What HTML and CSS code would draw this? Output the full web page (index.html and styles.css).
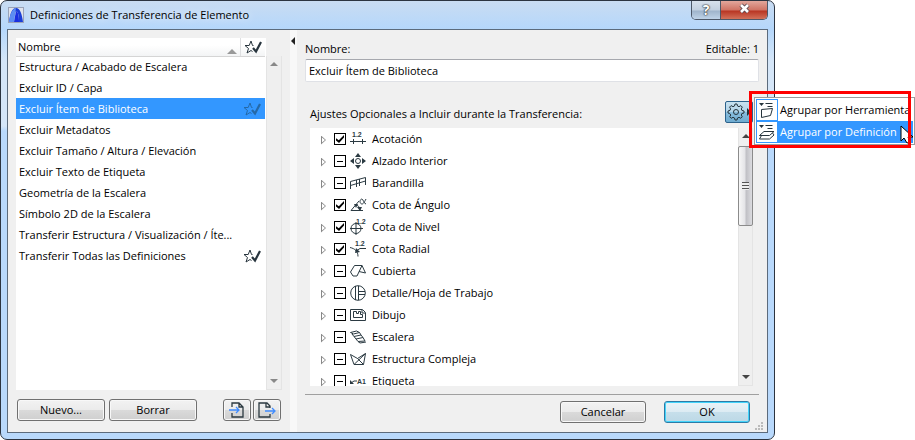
FILE: index.html
```
<!DOCTYPE html>
<html lang="es">
<head>
    <meta charset="UTF-8">
    <title>Definiciones de Transferencia de Elemento</title>
    <link rel="stylesheet" href="styles.css">
</head>
<body>
    <!--iconos repetidos-->
    <svg class="defs" width="0" height="0">
        <symbol id="star" viewBox="0 0 18 14">
            <path d="M9.500 5.500H8.500L7 1 5.200 5.500H1l3.500 3-1.500 4.500 4-2.500 1.500 1" fill="none" stroke="currentColor"/>
            <path d="M9 8l3 3.500 5-9.500" fill="none" stroke="currentColor" stroke-width="2.2"/>
        </symbol>
    </svg>

    <div class="window">
        <div class="titlebar">
            <svg class="logo" width="16" height="16" viewBox="0 0 16 16">
                <rect x=".5" y=".5" width="15" height="15" fill="#dfe3ec" stroke="#9aa3b8"/>
                <path d="M1 15C2 7 4 1 8 1c4 0 6 6 7 14h-4C11 9 10 4 8 4z" fill="#1c3fd6"/>
                <path d="M1 15C2 7 4 2 8 1L6 15z" fill="#5c8df2"/>
                <path d="M6 15l2-11c2 0 3 5 3 11z" fill="#1a2fe0"/>
            </svg>
            <h1>Definiciones de Transferencia de Elemento</h1>
            <div class="caption">
                <button type="button" class="help" aria-label="Ayuda">?</button>
                <button type="button" class="close" aria-label="Cerrar">
                    <svg width="13" height="11" viewBox="0 0 13 11"><path d="M3 2l7 7M10 2L3 9" stroke="#5b4a50" stroke-width="4.4"/><path d="M3 2l7 7M10 2L3 9" stroke="#fff" stroke-width="2.6"/></svg>
                </button>
            </div>
        </div>

        <div class="client">
            <!--lista de definiciones-->
            <div class="left">
                <div class="list">
                    <table>
                        <thead>
                            <tr>
                                <th>Nombre<i class="sort"></i></th>
                                <th class="mark"><svg width="18" height="14"><use href="#star"/></svg></th>
                            </tr>
                        </thead>
                        <tbody>
                            <tr><td>Estructura / Acabado de Escalera</td><td></td></tr>
                            <tr><td>Excluir ID / Capa</td><td></td></tr>
                            <tr class="selected"><td>Excluir Ítem de Biblioteca</td><td class="mark"><svg width="18" height="14"><use href="#star"/></svg></td></tr>
                            <tr><td>Excluir Metadatos</td><td></td></tr>
                            <tr><td>Excluir Tamaño / Altura / Elevación</td><td></td></tr>
                            <tr><td>Excluir Texto de Etiqueta</td><td></td></tr>
                            <tr><td>Geometría de la Escalera</td><td></td></tr>
                            <tr><td>Símbolo 2D de la Escalera</td><td></td></tr>
                            <tr><td>Transferir Estructura / Visualización / Íte...</td><td></td></tr>
                            <tr><td>Transferir Todas las Definiciones</td><td class="mark"><svg width="18" height="14"><use href="#star"/></svg></td></tr>
                        </tbody>
                    </table>
                    <div class="scroll off"><i class="up"></i><i class="down"></i></div>
                </div>
                <div class="tools">
                    <button type="button" class="btn">Nuevo...</button>
                    <button type="button" class="btn">Borrar</button>
                    <button type="button" class="btn small first" aria-label="Importar">
                        <svg width="18" height="18" viewBox="0 0 18 18" fill="none"><path d="M4 6V2h7l4 4v10H4v-4M11 2v4h4" stroke="#2b3940" stroke-width="1.3"/><path d="M1 9h10M8 6l3 3-3 3" stroke="#3f8cff" stroke-width="1.3"/></svg>
                    </button>
                    <button type="button" class="btn small" aria-label="Exportar">
                        <svg width="18" height="18" viewBox="0 0 18 18" fill="none"><path d="M12 7V5L9 2H1v14h11v-3M8 2v4h4" stroke="#2b3940" stroke-width="1.3"/><path d="M7 10h10M14 7l3 3-3 3" stroke="#3f8cff" stroke-width="1.3"/></svg>
                    </button>
                </div>
            </div>

            <div class="divider"><i></i></div>

            <!--ajustes-->
            <form class="right">
                <div class="labels">
                    <label for="name">Nombre:</label>
                    <span>Editable: 1</span>
                </div>
                <input class="name" id="name" type="text" value="Excluir Ítem de Biblioteca">

                <div class="options-head">
                    <span>Ajustes Opcionales a Incluir durante la Transferencia:</span>
                    <div class="gear-wrap">
                        <button type="button" class="gear" aria-label="Agrupar">
                            <svg width="24" height="18" viewBox="0 0 24 18" fill="none" stroke="#26343c">
                                <path d="M8 1h2l.5 2 1.5.7 1.8-1.1 1.5 1.5-1 1.8.6 1.5 2.1.6v2l-2.1.5-.6 1.5 1 1.8-1.5 1.5-1.8-1-1.5.7L10 17H8l-.5-2-1.5-.7-1.8 1-1.5-1.5 1.1-1.8L2.700 10.500 1 10V8l2-.6.6-1.500-1-1.800 1.500-1.500L6 3.700 7.500 3z"/>
                                <circle cx="9" cy="9" r="2.500"/>
                                <path d="M20 5v8l4-4z" fill="#26343c" stroke="none"/>
                            </svg>
                        </button>
                        <div class="menu">
                            <button type="button">
                                <svg width="22" height="22" viewBox="0 0 20 20" fill="none" stroke="#26343c"><path d="M2 3h5L4.500 6z" fill="#26343c" stroke="none"/><path d="M8.500 3.500h7M10.500 6.500h5M4.500 9.500l11-1-2 7-9 2z"/></svg>
                                Agrupar por Herramienta
                            </button>
                            <button type="button" class="active">
                                <svg width="22" height="22" viewBox="0 0 20 20" fill="none" stroke="#26343c"><path d="M2 3h5L4.500 6z" fill="#26343c" stroke="none"/><path d="M8.500 3.500h7M10.500 6.500h5M7 9.500h10l-4.500 4h-10zM4.500 13.500l-2 3.500h10l4.500-4-1.500-2"/></svg>
                                Agrupar por Definición
                            </button>
                            <svg class="cursor" width="14" height="19" viewBox="0 0 14 19"><path d="M1 1v15l3-3 3 5 3-1-2-5h5z" fill="#fff" stroke="#000"/></svg>
                        </div>
                    </div>
                </div>

                <div class="tree">
                    <ul>
                        <li><i class="arrow"></i><label><input type="checkbox" checked>
                            <svg viewBox="0 0 16 16"><text x="2" y="6">1.2</text><path d="M0 10.500h16M3.500 8v5M12.500 8v5"/></svg>Acotación</label></li>
                        <li><i class="arrow"></i><label><input type="checkbox" class="mixed">
                            <svg viewBox="0 0 16 16"><circle cx="8" cy="8" r="2.500"/><path class="fill" d="M8 0l3 4H5zM8 16l3-4H5zM0 8l4-3v6zM16 8l-4-3v6z"/></svg>Alzado Interior</label></li>
                        <li><i class="arrow"></i><label><input type="checkbox" class="mixed">
                            <svg viewBox="0 0 16 16"><path d="M.5 14V6.500l15-4V10M.5 10.500l15-4.500M6.500 12V5M9.500 11V4"/></svg>Barandilla</label></li>
                        <li><i class="arrow"></i><label><input type="checkbox" checked>
                            <svg viewBox="0 0 16 16"><path d="M9 4l-8 9.500h12M5 8c3 0 5 2 5 5M16 2c-2 4-3 5-4 5s-2-1-2-2.500 1-2.500 2-2.500 2 5 4 5"/><path class="fill" d="M4 7l4 0-2 4zM7 10h5l-2 4z"/></svg>Cota de Ángulo</label></li>
                        <li><i class="arrow"></i><label><input type="checkbox" checked>
                            <svg viewBox="0 0 16 16"><circle cx="6" cy="9.500" r="5"/><path d="M0 9.500h13M6 3v13"/><text x="6" y="5">1.2</text></svg>Cota de Nivel</label></li>
                        <li><i class="arrow"></i><label><input type="checkbox" checked>
                            <svg viewBox="0 0 16 16"><path d="M0 6.500c5 1 8 4 8 9M6 10l4-2.500h6"/><path class="fill" d="M5 12l1-5 4 4z"/><text x="5" y="5">1.2</text></svg>Cota Radial</label></li>
                        <li><i class="arrow"></i><label><input type="checkbox" class="mixed">
                            <svg viewBox="0 0 16 16"><path d="M.5 9l4-6.500H12L7 13H3zM12 2.500l3.500 7.500-6.500-1.500"/></svg>Cubierta</label></li>
                        <li><i class="arrow"></i><label><input type="checkbox" class="mixed">
                            <svg viewBox="0 0 16 16"><circle cx="8" cy="8" r="7.300"/><path d="M5.500 1v14M8.500 1v14M8.500 6.500H15M8.500 9.500H15"/></svg>Detalle/Hoja de Trabajo</label></li>
                        <li><i class="arrow"></i><label><input type="checkbox" class="mixed">
                            <svg viewBox="0 0 16 16"><path d="M.5 2.500h12l3 3v8H.5zM12 3v3h3M3.500 4.500h3v2h2v-2h2v3h2v3h-9z"/></svg>Dibujo</label></li>
                        <li><i class="arrow"></i><label><input type="checkbox" class="mixed">
                            <svg viewBox="0 0 16 16"><path d="M.5 3.500l6-1.500 3 1.500-6 1.500zM2 5l2 2.500 7-1.500-1.500-2.500M4 7.500l2 2.500 7-1.500L11 6M6 10l2 2.500 7-.5-2-3.500M8 12.500l2 1.500 6-1"/></svg>Escalera</label></li>
                        <li><i class="arrow"></i><label><input type="checkbox" class="mixed">
                            <svg viewBox="0 0 16 16"><path d="M.5 3.500l7 4 8-5-2 11H4zM4 13.500L15.500 2.500M7.500 7.500l6 6"/></svg>Estructura Compleja</label></li>
                        <li><i class="arrow"></i><label><input type="checkbox" class="mixed">
                            <svg viewBox="0 0 16 16"><path d="M1 10l3-2h3"/><path class="fill" d="M0 11V7l4 4z"/><text x="7" y="11">A1</text></svg>Etiqueta</label></li>
                    </ul>
                    <div class="scroll"><i class="up"></i><div class="thumb"></div><i class="down"></i></div>
                </div>

                <div class="actions">
                    <button type="button" class="btn">Cancelar</button>
                    <button type="submit" class="btn ok">OK</button>
                </div>
                <svg class="grip" width="9" height="9" viewBox="0 0 9 9"><path d="M6 0h2v2H6zM3 3h2v2H3zM6 3h2v2H6zM0 6h2v2H0zM3 6h2v2H3zM6 6h2v2H6z" fill="#bbb"/></svg>
            </form>
        </div>
    </div>
</body>
</html>
```
FILE: styles.css
```
*, :before, :after{
    box-sizing: border-box;
}
body{
    margin: 0;
    padding-right: 140px; /*sitio para el menu*/
    background: #fff;
    font: 11px/16px "Open Sans", "Noto Sans", sans-serif;
    color: #000;
}
button, input{
    font: inherit;
    color: inherit;
    margin: 0;
}
.defs{
    position: absolute;
}

/*ventana*/
.window{
    display: flex;
    flex-direction: column;
    min-height: 100vh;
    padding: 0 6px 6px;
    border: 1px solid #2c3440;
    border-radius: 7px;
    background: linear-gradient(#c9dcf2, #b5d7fb 28px, #d5e6f8 60px, #d5e6f8 125px, #b9d9fc 130px);
}
.titlebar{
    display: flex;
    height: 28px;
    padding-left: 1px;
}
.logo{
    margin: 6px 6px 0 0;
}
.titlebar h1{
    flex: 1;
    margin: 6px 0 0;
    font-size: 11px;
    font-weight: normal;
    text-shadow: 0 0 8px #fff;
}
.caption{
    display: flex;
    height: 19px;
    border: 1px solid #4d5868;
    border-top: 0;
    border-radius: 0 0 5px 5px;
    overflow: hidden;
}
.caption button{
    padding: 0;
    border: 0;
    color: #fff;
}
.help{
    width: 28px;
    background: linear-gradient(#d7e1ec, #c2d0e0 9px, #9fb4cb 10px, #bfd3e8);
    font-weight: bold;
    font-size: 14px;
    text-shadow: 0 0 1px #333, 0 0 1px #333, 0 0 2px #333;
}
.caption .close{
    width: 47px;
    border-left: 1px solid #4d5868;
    background: linear-gradient(#e2a79c, #cf7364 9px, #b83523 10px, #d2715a);
}
.client{
    display: flex;
    flex: 1;
    border: 1px solid #5c6b7c;
    background: #f0f0f0;
}

/*botones*/
.btn{
    width: 88px;
    height: 22px;
    padding: 0;
    border: 1px solid #707070;
    border-radius: 3px;
    background: linear-gradient(#f2f2f2, #ebebeb 50%, #dadada 51%, #cfcfcf);
    box-shadow: inset 0 0 0 1px #f8f8f8;
}
.btn.small{
    width: 28px;
}
.btn svg{
    display: block;
    margin: auto;
}
.btn.ok{
    border-color: #2c7ba6;
    background: linear-gradient(#eaf3f8, #dcebf3 50%, #c6dfeb 51%, #bcd8e6);
    box-shadow: inset 0 0 0 1px #43d4fb;
}

/*parte izquierda*/
.left{
    display: flex;
    flex-direction: column;
    width: 274px;
    padding: 8px 0 11px 8px;
}
.list{
    display: flex;
    flex: 1;
    background: linear-gradient(#fff, #fff) no-repeat 0 0 / 250px 100%;
}
table{
    width: 249px;
    height: 228px;
    border-collapse: collapse;
    table-layout: fixed;
}
th, td{
    height: 21px;
    padding: 1px 0 0 3px;
    text-align: left;
    font-weight: normal;
    white-space: nowrap;
}
th{
    position: relative;
    height: 18px;
    border-bottom: 1px solid #d5d5d5;
    background: linear-gradient(#fff 40%, #f3f4f5);
}
th:first-child{
    padding-left: 2px;
}
th.mark, td:last-child{
    width: 25px;
}
th.mark{
    border-left: 1px solid #dedfe1;
}
.mark svg{
    display: block;
    color: #28353e;
}
.sort{
    position: absolute;
    right: 3px;
    bottom: 2px;
    border: 5px solid transparent;
    border-top: 0;
    border-bottom-color: #999;
}
.selected{
    background: #3397ff;
    color: #fff;
}
.selected svg{
    color: #2569a8;
}
.tools{
    display: flex;
    gap: 2px;
    padding: 9px 0 0 1px;
}
.tools .btn + .btn:not(.small){
    margin-left: 2px;
}
.tools .first{
    margin-left: 24px;
}

/*barras*/
.scroll{
    display: flex;
    flex-direction: column;
    align-items: center;
    width: 15px;
    padding: 6px 0;
    border: solid #e4e4e4;
    border-width: 0 1px 1px;
    background: #efefef;
}
.scroll.off{
    width: 16px;
    margin: 18px 0 0 1px;
}
.up, .down{
    border: 4px solid transparent;
}
.up{
    border-top: 0;
    border-bottom-color: #444;
}
.down{
    margin-top: auto;
    border-bottom: 0;
    border-top-color: #444;
}
.off .up{
    border-bottom-color: #888;
}
.off .down{
    border-top-color: #888;
}
.thumb{
    width: 15px;
    height: 80px;
    margin-top: 8px;
    border: 1px solid #8b8b8b;
    border-radius: 2px;
    background:
        repeating-linear-gradient(#555 0 1px, #eee 1px 3px) no-repeat center / 7px 8px,
        linear-gradient(90deg, #f7f7f7, #e4e4e7 45%, #c0c0c5 55%, #dcdce0);
}

.divider{
    width: 15px;
    background: linear-gradient(#f8f8f8, #f8f8f8) no-repeat 8px 0 / 7px 100%;
}
.divider i{
    display: block;
    width: 4px;
    margin: 7px 0 0 9px;
    border: 4px solid transparent;
    border-left: 0;
    border-right-color: #222;
}

/*parte derecha*/
.right{
    position: relative;
    display: flex;
    flex: 1;
    flex-direction: column;
    min-width: 0;
    padding: 11px 8px 9px;
}
.labels{
    display: flex;
    justify-content: space-between;
    height: 18px;
}
.name{
    width: 100%;
    height: 23px;
    padding: 0 3px;
    border: 1px solid #dfe1e6;
    border-top-color: #a6a8ae;
    border-radius: 2px;
    background: #fff;
}
.options-head{
    display: flex;
    justify-content: space-between;
    align-items: center;
    height: 22px;
    margin: 19px 6px 5px 5px;
}
.options-head > span{
    padding-top: 4px;
}
.gear-wrap{
    position: relative;
}
.gear{
    display: block;
    width: 28px;
    height: 22px;
    padding: 0 0 0 1px;
    border: 1px solid #2c628b;
    border-radius: 2px;
    background: linear-gradient(#c8e1ef, #b0d3e8 50%, #89bddd 51%, #6eabd0);
}
.gear svg{
    display: block;
}
.menu{
    position: absolute;
    left: 29px;
    top: -4px;
    z-index: 1;
    width: 161px;
    padding: 1px;
    border: 1px solid #9b9b9b;
    background: #fff;
}
.menu button{
    display: flex;
    align-items: center;
    gap: 2px;
    width: 100%;
    height: 22px;
    padding: 0;
    border: 0;
    background: #fff;
    white-space: nowrap;
}
.menu button svg{
    flex: none;
    border: 1px solid #3397ff;
    background: #fff;
}
.menu .active{
    background: #3397ff;
    color: #fff;
}
.cursor{
    position: absolute;
    right: 0;
    bottom: 0;
}
/*marco rojo*/
.menu:after{
    content: "";
    position: absolute;
    left: -6px;
    top: -7px;
    width: 162px;
    height: 57px;
    border: 3px solid #f00;
}
.tree{
    display: flex;
    flex: 1 1 0;
    min-height: 200px;
    margin: 0 6px 0 5px;
    overflow: hidden;
    background: #fff;
}
.tree ul{
    flex: 1;
    height: 0;
    margin: 0;
    padding: 0;
    list-style: none;
}
.tree li{
    display: flex;
    align-items: center;
    height: 22px;
    padding-left: 11px;
}
.tree label{
    display: flex;
    align-items: center;
}
.arrow{
    width: 5px;
    height: 9px;
    margin: 2px 8px 0 0;
    background: #888;
    clip-path: polygon(0 0, 100% 50%, 0 100%, 0 0, 1px 2px, 1px 7px, 4px 50%, 1px 2px);
}
.tree input{
    position: relative;
    appearance: none;
    width: 12px;
    height: 12px;
    margin-right: 4px;
    border: 1px solid #000;
    background: #fff;
}
.tree input:checked:before{
    content: "";
    position: absolute;
    inset: 1px;
    background: #000;
    clip-path: polygon(0 40%, 35% 65%, 100% 0, 100% 30%, 38% 100%, 0 70%);
}
.tree .mixed:before{
    content: "";
    position: absolute;
    left: 2px;
    right: 2px;
    top: 5px;
    height: 1px;
    background: #000;
}
.tree label svg{
    width: 16px;
    height: 16px;
    margin-right: 6px;
    overflow: visible;
    fill: none;
    stroke: #2b3a42;
}
.tree .fill, .tree text{
    fill: #2b3a42;
    stroke: none;
}
.tree text{
    font: bold 7px "Liberation Sans", sans-serif;
}
.actions{
    display: flex;
    justify-content: flex-end;
    gap: 18px;
    margin-top: 8px;
    padding: 6px 9px 0 0;
    border-top: 1px solid #a0a0a0;
}
.actions .btn{
    width: 86px;
}
.grip{
    position: absolute;
    right: 3px;
    bottom: 1px;
}
```
